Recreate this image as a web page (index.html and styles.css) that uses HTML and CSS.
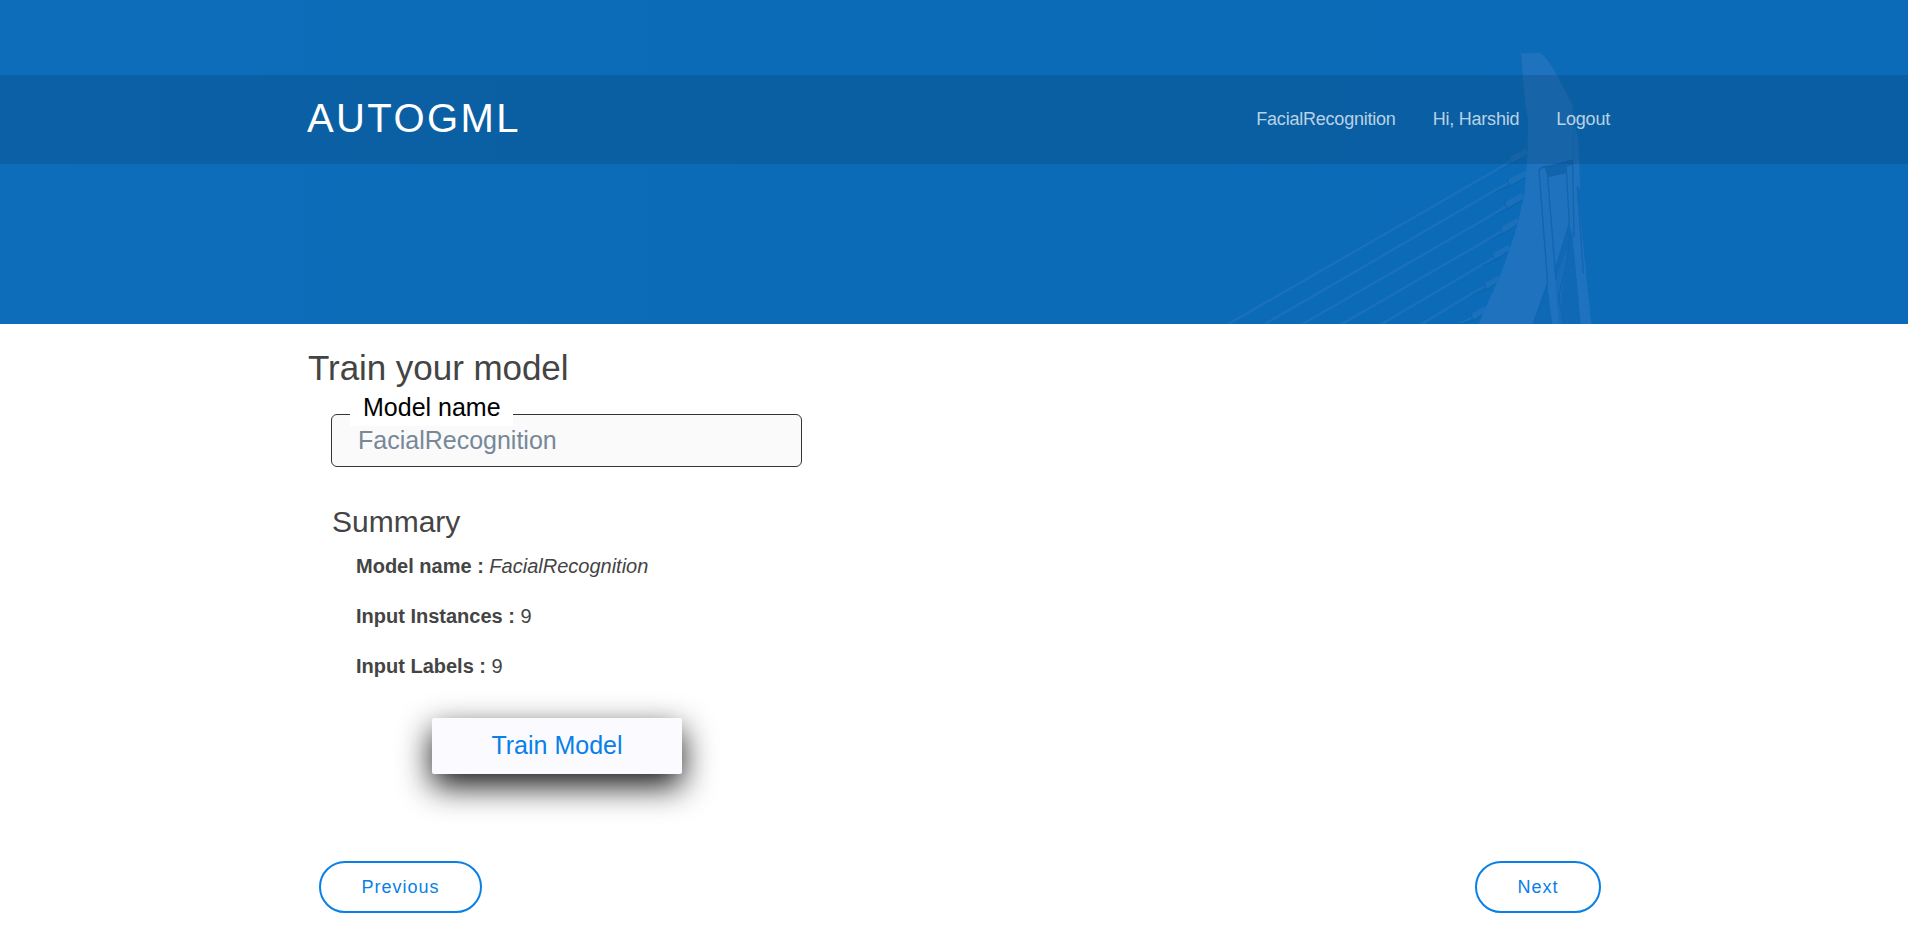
FILE: index.html
```html
<!DOCTYPE html>
<html lang="en">
<head>
<meta charset="utf-8">
<title>AutoGML</title>
<link rel="stylesheet" href="styles.css">
</head>
<body>
<header class="hero">
  <svg class="hero-art" width="450" height="304" viewBox="0 0 1350 912" aria-hidden="true">
    <g class="cables">
      <path d="M85 912L890 449L940 418M195 912L890 508L935 484M308 912L885 580L928 552M425 912L875 652L912 628M545 912L850 732L890 708M665 912L822 817L865 794M780 912L820 890"/>
    </g>
    <g class="sockets">
      <path d="M930 421L980 394M928 488L978 460M918 555L970 526M904 631L955 602M880 709L930 682M855 800L898 774M815 892L858 866"/>
    </g>
    <g class="socket-edges">
      <path d="M895 452L936 432L980 405M926 408V418L936 432M890 516L932 498L976 472M922 476V486L932 498M884 586L924 567L968 540M916 544V554L924 567M870 658L912 641L950 614M902 620V630L912 641M846 738L888 721L925 694M878 700V710L888 721M818 824L862 809L895 786M854 788V798L862 809M780 912L824 901L855 878M814 880V890L824 901"/>
    </g>
    <path class="tower" d="M960 82L964 98L1020 98C1045 108 1080 180 1118 255L1120 310L1134 350L1143 510L1132 500L1174 912L835 912L905 755L945 640L972 530L983 400L984 300L975 240Z"/>
    <path class="sky" d="M1108 610L1096 660L1065 755L1074 830L1091 912L1142 912L1118 650Z"/>
    <path class="sky" d="M1042 790L1000 912H1056Z"/>
    <path class="tower-side" d="M1110 660L1085 830L1091 912L1076 912L1066 780Z"/>
    <path class="shade" d="M1016 450Q1020 436 1050 436L1118 418L1122 432L1098 440L1098 460L1042 472L1036 446Q1025 440 1018 455Z"/>
    <path class="edge" d="M1017 450L1043 790L1000 912M1043 470L1068 780M1098 430L1108 610L1064 755M1112 640L1098 735L1076 830L1091 912M1118 430L1122 650M1132 500L1150 760"/>
    <path class="rim" d="M964 98L1020 98C1045 108 1080 180 1118 258M962 82L966 180L975 240M1120 310V415M1134 350L1143 510L1132 500"/>
  </svg>
  <nav class="navbar">
    <div class="nav-inner">
      <a class="brand">AUTOGML</a>
      <div class="nav-links"><a>FacialRecognition</a><a>Hi, Harshid</a><a>Logout</a></div>
    </div>
  </nav>
</header>
<main class="content">
  <h1 class="title">Train your model</h1>
  <div class="field">
    <label class="field-label" for="model">Model name</label>
    <input class="field-input" id="model" value="FacialRecognition" disabled>
  </div>
  <section class="summary">
    <h2 class="summary-title">Summary</h2>
    <p><b>Model name :</b> <i>FacialRecognition</i></p>
    <p><b>Input Instances :</b> 9</p>
    <p><b>Input Labels :</b> 9</p>
  </section>
  <button class="train">Train Model</button>
  <div class="pager">
    <button class="pill">Previous</button>
    <button class="pill">Next</button>
  </div>
</main>
</body>
</html>
```
FILE: styles.css
```css
* { box-sizing: border-box; }
body {
  margin: 0;
  height: 940px;
  overflow: hidden;
  background: #fff;
  color: #444;
  font-family: "Liberation Sans", Arial, sans-serif;
}
.hero {
  position: relative;
  height: 324px;
  padding-top: 75px;
  background: linear-gradient(90deg, #0d6dba 0%, #0b6bb7 40%, #0b6bb8 100%);
}
.hero-art { position: absolute; left: 1200px; top: 20px; }
.cables { fill: none; stroke: #1b70bc; stroke-width: 7; }
.sockets { fill: none; stroke: #1a70bb; stroke-width: 18; }
.socket-edges { fill: none; stroke: #0c64ad; stroke-width: 3; }
.tower { fill: #1e72be; }
.tower-side { fill: #176db8; }
.sky { fill: #0f69b4; }
.shade { fill: #1163ac; }
.edge { fill: none; stroke: #1265af; stroke-width: 4; }
.rim { fill: none; stroke: #1568b1; stroke-width: 2; }
.navbar { position: relative; height: 89px; background: rgba(10, 70, 120, 0.3); }
.nav-inner {
  width: 1303px;
  height: 100%;
  margin-left: 307px;
  display: flex;
  justify-content: space-between;
  align-items: center;
}
.brand { padding-bottom: 3px; color: #fff; font-size: 40px; letter-spacing: 2.4px; line-height: 46px; }
.nav-links { display: flex; gap: 37px; font-size: 18px; letter-spacing: -0.22px; color: rgba(255, 255, 255, 0.72); }
.content { width: 1303px; margin-left: 307px; display: flex; flex-direction: column; align-items: flex-start; }
.title { margin: 24px 0 0 1px; font-size: 35px; font-weight: 400; line-height: 40px; letter-spacing: -0.05px; }
.field { position: relative; margin: 26px 0 0 24px; }
.field-label {
  position: absolute;
  left: 19px;
  top: -22px;
  height: 34px;
  padding: 0 12px 0 13px;
  background: #fff;
  color: #000;
  font-size: 25px;
  line-height: 31px;
}
.field-input {
  display: block;
  width: 471px;
  height: 53px;
  padding: 0 26px;
  border: 1px solid #3b3033;
  border-radius: 6px;
  background: #fafafa;
  color: #778899;
  font: 25px "Liberation Sans", Arial, sans-serif;
}
.summary { margin: 38px 0 0 25px; font-size: 20px; }
.summary-title { margin: 0 0 12px; font-size: 30px; font-weight: 400; line-height: 34px; }
.summary p { margin: 0 0 20px 24px; line-height: 30px; }
.train {
  width: 250px;
  height: 56px;
  margin: 17px 0 0 125px;
  padding: 0 0 2px;
  border: 0;
  border-radius: 2px;
  background: #fbfaff;
  color: #0880e8;
  box-shadow: 0 12px 32px rgba(0, 0, 0, 0.92);
  font: 25px "Liberation Sans", Arial, sans-serif;
}
.pager { width: 1282px; margin: 87px 0 0 12px; display: flex; justify-content: space-between; }
.pill {
  height: 52px;
  padding: 0 40.5px;
  border: 2px solid #0880e8;
  border-radius: 26px;
  background: #fff;
  color: #0880e8;
  font: 18px "Liberation Sans", Arial, sans-serif;
  letter-spacing: 1px;
}
```
